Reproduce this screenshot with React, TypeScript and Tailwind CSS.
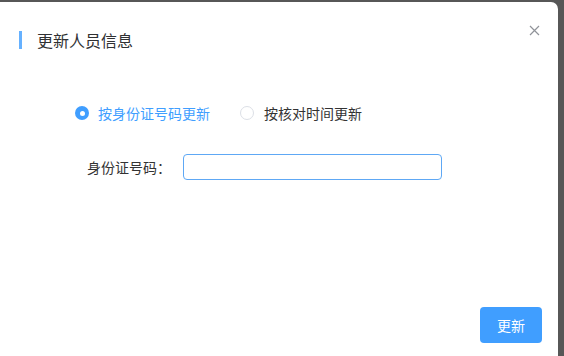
import React from "react";

export default function App() {
  return (
    <div
      className="w-[564px] h-[356px] bg-[#575757] overflow-hidden pt-[2px]"
      style={{ fontFamily: '"Noto Sans CJK SC", "Noto Sans", sans-serif' }}
    >
      <div className="w-[558px] h-[360px] bg-white rounded-tr-[7px] relative flex flex-col">
        <div className="flex items-center h-[36px] mt-[20px] pl-[19px]">
          <div className="w-[3px] h-[18px] bg-[#66b1ff]" />
          <div className="ml-[15px] text-[16px] text-[#303133] leading-none">更新人员信息</div>
        </div>
        <button className="absolute right-[17px] top-[21px] w-[14px] h-[14px] flex items-center justify-center">
          <svg width="11" height="11" viewBox="0 0 11 11">
            <path d="M1 1L10 10M10 1L1 10" stroke="#909399" strokeWidth="1.2" />
          </svg>
        </button>
        <div className="flex items-center mt-[44px] ml-[75px] h-[22px]">
          <div className="flex items-center">
            <span className="w-[14px] h-[14px] rounded-full bg-[#409eff] flex items-center justify-center">
              <span className="w-[5px] h-[5px] rounded-full bg-white" />
            </span>
            <span className="ml-[9px] text-[14px] text-[#409eff]">按身份证号码更新</span>
          </div>
          <div className="flex items-center ml-[30px]">
            <span className="w-[14px] h-[14px] rounded-full border border-[#dcdfe6] bg-white" />
            <span className="ml-[10px] text-[14px] text-[#333]">按核对时间更新</span>
          </div>
        </div>
        <div className="flex items-center mt-[30px] ml-[87px]">
          <span className="w-[96px] text-[14px] text-[#333]">身份证号码：</span>
          <div className="w-[259px] h-[26px] rounded-[4px] border border-[#5ea8f5]" />
        </div>
        <div className="flex justify-end mt-[127px] pr-[16px]">
          <button className="w-[62px] h-[36px] rounded-[4px] bg-[#409eff] text-white text-[14px]">
            更新
          </button>
        </div>
      </div>
    </div>
  );
}
